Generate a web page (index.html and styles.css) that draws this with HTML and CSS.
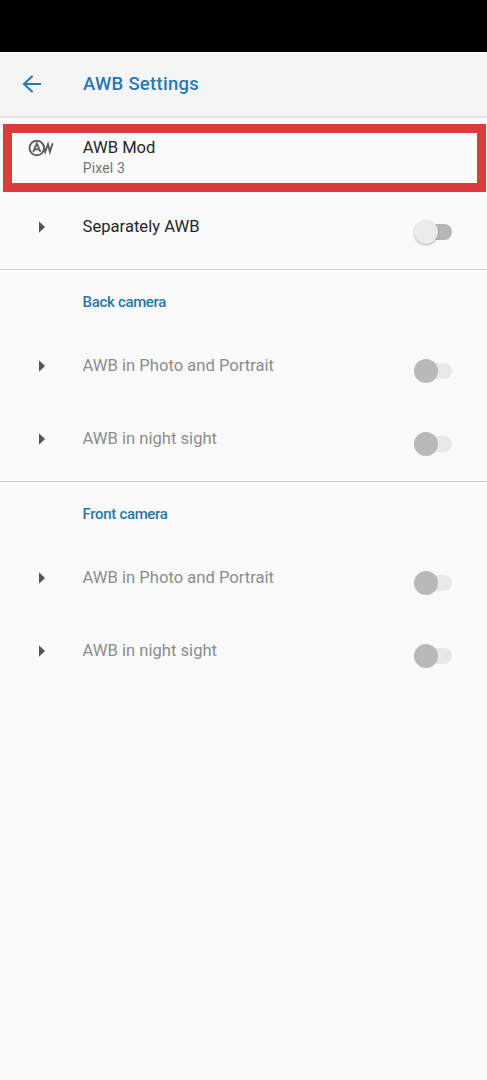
FILE: index.html
```html
<!DOCTYPE html>
<html lang="en">
<head>
<meta charset="utf-8">
<title>AWB Settings</title>
<link rel="stylesheet" href="styles.css">
</head>
<body>
<div class="status-bar"></div>
<header class="app-bar">
  <svg class="back" width="20" height="18" viewBox="0 0 20 18"><path d="M19 9H2M10.6 1L2 9l8.6 8" fill="none" stroke="currentColor" stroke-width="2.1"/></svg>
  <h1 class="title">AWB Settings</h1>
</header>
<main>
  <section class="mod">
    <svg class="mod-icon" width="26" height="18" viewBox="0 0 26 18"><g fill="none" stroke="currentColor" stroke-width="2"><circle cx="8.8" cy="9" r="7.3"/><path d="M5.2 12.9L8.8 4.4l3.6 8.5M6.4 10.4h4.8" stroke-width="1.9"/><path d="M15 4.8l2.2 8 2.8-7.6 1.9 7.6 2.8-8.6" stroke-width="1.9"/></g></svg>
    <div>
      <div class="label">AWB Mod</div>
      <div class="value">Pixel 3</div>
    </div>
  </section>
  <section class="group">
    <div class="row"><i class="caret"></i><span class="label">Separately AWB</span><span class="switch"></span></div>
  </section>
  <section class="group">
    <h2 class="heading">Back camera</h2>
    <div class="row disabled"><i class="caret"></i><span class="label">AWB in Photo and Portrait</span><span class="switch"></span></div>
    <div class="row disabled"><i class="caret"></i><span class="label">AWB in night sight</span><span class="switch"></span></div>
  </section>
  <section class="group last">
    <h2 class="heading">Front camera</h2>
    <div class="row disabled"><i class="caret"></i><span class="label">AWB in Photo and Portrait</span><span class="switch"></span></div>
    <div class="row disabled"><i class="caret"></i><span class="label">AWB in night sight</span><span class="switch"></span></div>
  </section>
</main>
</body>
</html>
```
FILE: styles.css
```css
* { box-sizing: border-box; }
body {
  margin: 0;
  min-height: 1080px;
  background: #fafafa;
  color: #262626;
  font-family: Roboto, "Liberation Sans", sans-serif;
}
.status-bar { height: 52px; background: #000; }
.app-bar {
  display: flex;
  align-items: center;
  height: 66px;
  padding: 0 0 2px 22px;
  background: #f5f5f5;
  border-top: 2px solid #fdfdfd;
  border-bottom: 2px solid #e6e6e4;
  color: #2878b4;
}
.back { width: 20px; margin-right: 41px; }
.title {
  margin: 0;
  font-size: 18.5px;
  font-weight: 500;
  line-height: 24px;
  letter-spacing: 0.27px;
}
.mod {
  display: flex;
  height: 68px;
  margin: 6px 1px 4px 3px;
  padding: 5px 0 0 16px;
  border: 9px solid #dc3b3e;
  background: #fbfbfb;
}
.mod-icon { margin: 1px 28.7px 0 0; color: #606060; }
.label { font-size: 16.6px; line-height: 20px; }
.value { font-size: 14px; line-height: 20px; letter-spacing: 0.15px; color: #757575; }
.group { border-bottom: 1px solid #cdcdcd; }
.group.last { border-bottom: 0; }
.heading {
  margin: 0;
  height: 65px;
  padding: 22px 0 0 82.6px;
  font-size: 15px;
  font-weight: 500;
  line-height: 20px;
  letter-spacing: -0.33px;
  color: #2878a8;
}
.row {
  display: grid;
  grid-template-columns: 44px 331px 38px;
  padding: 20px 0 0 38.6px;
  height: 73px;
}
.row .label { margin-top: 1px; }
.caret {
  width: 6.5px;
  height: 12px;
  margin-top: 5px;
  background: #555;
  clip-path: polygon(0 0, 100% 50%, 0 100%);
}
.disabled .label { color: #8c8c8c; }
.switch {
  position: relative;
  width: 34px;
  height: 16px;
  margin: 8px 0 0 4px;
  border-radius: 8px;
  background: #b5b5b5;
}
.switch::before {
  content: "";
  position: absolute;
  left: -4px;
  top: -4px;
  width: 24px;
  height: 24px;
  border-radius: 50%;
  background: #ebebeb;
  box-shadow: 0 1px 2px rgba(0, 0, 0, .3);
}
.disabled .switch { background: #e8e8e8; }
.disabled .switch::before { background: #b9b9b9; box-shadow: none; }
```
